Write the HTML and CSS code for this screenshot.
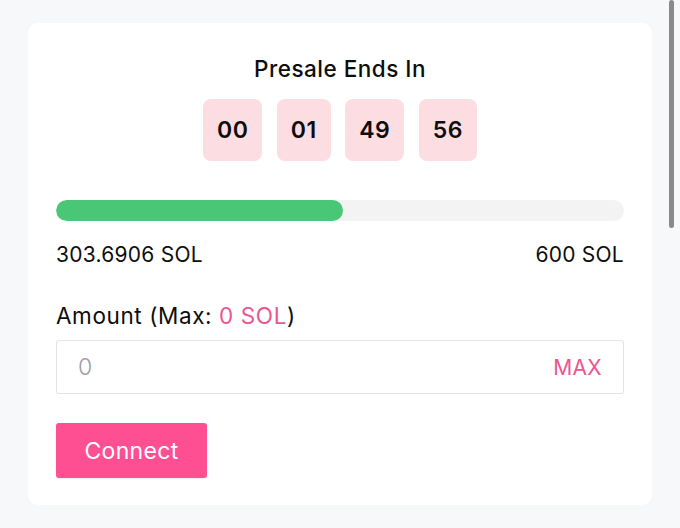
FILE: index.html
```html
<!DOCTYPE html>
<html>
<head>
<meta charset="utf-8">
<link rel="stylesheet" href="styles.css">
</head>
<body>
<div class="card">
  <div class="title">Presale Ends In</div>
  <div class="timer">
    <div class="box">00</div>
    <div class="box">01</div>
    <div class="box">49</div>
    <div class="box">56</div>
  </div>
  <div class="track"><div class="fill" style="width: 50.6%"></div></div>
  <div class="labels"><span>303.6906 SOL</span><span>600 SOL</span></div>
  <div class="amount">Amount (Max: <span class="pink">0 SOL</span>)</div>
  <div class="input"><span class="placeholder">0</span><span class="max">MAX</span></div>
  <button class="connect">Connect</button>
</div>
<div class="scrollbar"></div>
</body>
</html>
```
FILE: styles.css
```css
html, body {
  margin: 0;
  padding: 0;
}
body {
  background: #f7f8fa;
  font-family: Inter, "Liberation Sans", sans-serif;
  color: #0d0d0d;
  padding: 23px 28px 23px 28px;
  height: 528px;
  box-sizing: border-box;
}
.card {
  background: #fff;
  border-radius: 10px;
  padding: 28px 28px 27px 28px;
  display: flex;
  flex-direction: column;
}
.title {
  text-align: center;
  font-size: 22.5px;
  line-height: 36px;
  font-weight: 500;
  letter-spacing: 0.5px;
}
.timer {
  display: flex;
  justify-content: center;
  gap: 14.5px;
  margin-top: 12px;
}
.box {
  height: 62px;
  padding: 0 14px;
  background: #fcdde2;
  border-radius: 8px;
  display: flex;
  align-items: center;
  justify-content: center;
  font-size: 23px;
  font-weight: 600;
  letter-spacing: 0.5px;
}
.track {
  margin-top: 39px;
  height: 21px;
  background: #f3f3f3;
  border-radius: 11px;
  overflow: hidden;
}
.fill {
  height: 100%;
  background: #4ac776;
  border-radius: 11px;
}
.labels {
  display: flex;
  justify-content: space-between;
  margin-top: 21px;
  font-size: 21px;
  line-height: 26px;
  letter-spacing: 0.25px;
}
.amount {
  margin-top: 34px;
  font-size: 22.5px;
  line-height: 28px;
  letter-spacing: 0.6px;
}
.pink { color: #eb5690; }
.input {
  margin-top: 10px;
  height: 54px;
  border: 1px solid #e3e4e6;
  border-radius: 3px;
  box-sizing: border-box;
  display: flex;
  align-items: center;
  justify-content: space-between;
  padding: 0 21px;
}
.placeholder {
  color: #9aa0a8;
  font-size: 23px;
  font-weight: 300;
}
.max {
  color: #eb5690;
  font-size: 21px;
  letter-spacing: 0.3px;
}
.connect {
  margin-top: 29px;
  align-self: flex-start;
  width: 151px;
  height: 55px;
  border: none;
  border-radius: 3px;
  background: #fd4f92;
  color: #fff;
  font-family: Inter, "Liberation Sans", sans-serif;
  font-size: 23px;
  letter-spacing: 0.3px;
  box-shadow: 0 1px 2px rgba(0,0,0,0.08);
}
.scrollbar {
  position: fixed;
  top: 0;
  left: 669px;
  width: 5px;
  height: 228px;
  background: #8a8a8a;
  border-radius: 3px;
}
```
